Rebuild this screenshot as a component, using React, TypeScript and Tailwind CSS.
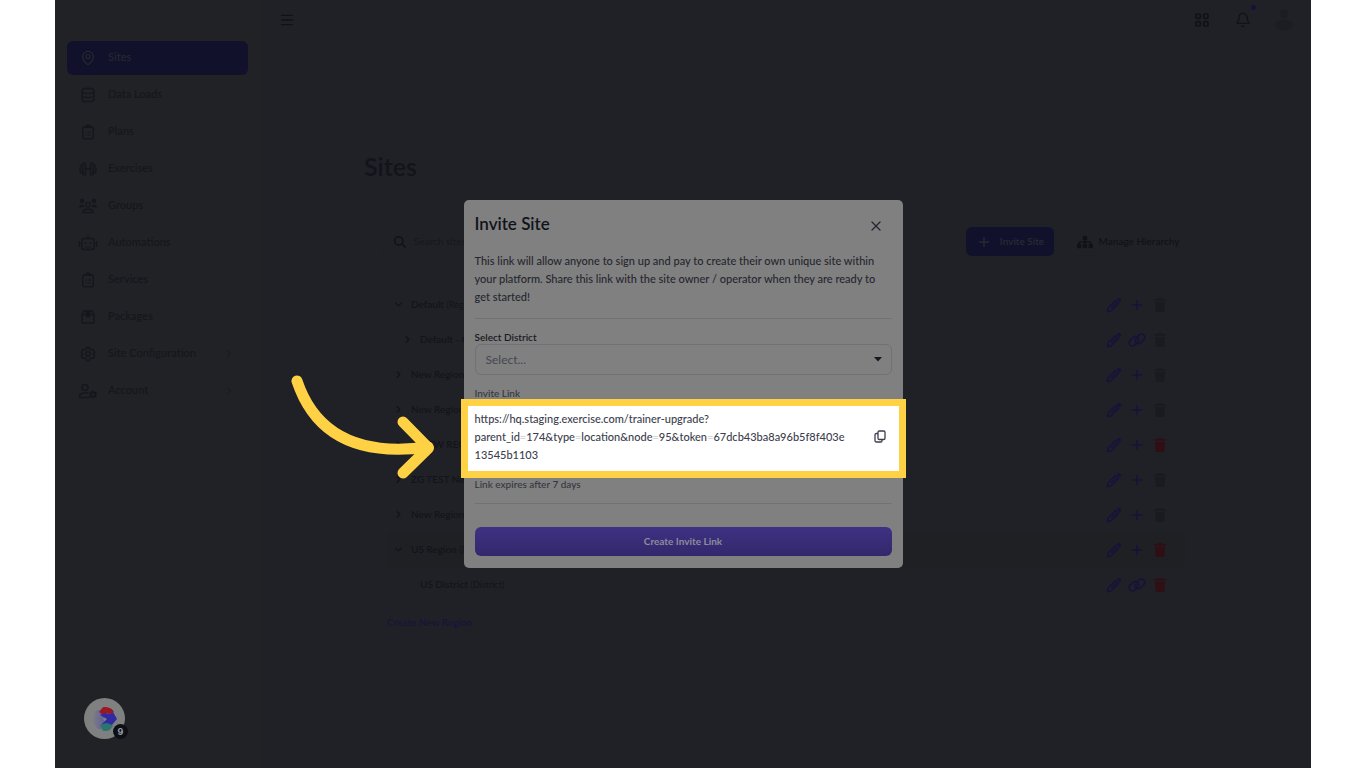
import { useState } from "react"
import type { ReactNode } from "react"
import { Bell, ChevronDown, ChevronRight, MapPin, Menu, Plus, X } from "lucide-react"
import { FaMagnifyingGlass, FaSitemap } from "react-icons/fa6"

const DatabaseIcon = () => (
    <svg viewBox="0 0 16 16" className="w-4 h-4" fill="none" stroke="currentColor" strokeWidth="1.5">
        <rect x="2" y="1.500" width="12" height="13" rx="3" />
        <path d="M2 4.500c0 1.500 2 2 6 2s6-.5 6-2M2 8.500c0 1.500 2 2 6 2s6-.5 6-2" />
    </svg>
)

const ClipboardIcon = () => (
    <svg viewBox="0 0 16 16" className="w-4 h-4" fill="none" stroke="currentColor" strokeWidth="1.5">
        <rect x="2.700" y="3" width="10.600" height="11.800" rx="1.500" />
        <path d="M5.500 3.500h5V2.200H9.500a1.500 1.500 0 0 0-3 0h-1z" fill="currentColor" strokeWidth="1" />
        <path d="M5 8h1.300M7.500 8h3.500M5 11h1.300M7.500 11h3.500" strokeWidth="1.200" />
    </svg>
)

const DumbbellIcon = () => (
    <svg viewBox="0 0 20 16" className="w-5 h-4" fill="none" stroke="currentColor" strokeWidth="1.5" strokeLinejoin="round">
        <rect x="5" y="2" width="2.5" height="12" rx="1" />
        <rect x="12.5" y="2" width="2.5" height="12" rx="1" />
        <path d="M5 4H4a1.5 1.5 0 0 0-1.500 1.500v5A1.500 1.500 0 0 0 4 12h1M15 4h1a1.500 1.500 0 0 1 1.500 1.500v5A1.500 1.500 0 0 1 16 12h-1M7.500 8h5M1 8h1.500M17.500 8H19" />
    </svg>
)

const GroupsIcon = () => (
    <svg viewBox="0 0 20 16" className="w-5 h-4">
        <g fill="currentColor">
            <circle cx="4" cy="3" r="2.200" />
            <circle cx="16" cy="3" r="2.200" />
            <path d="M1 9.500C1 7.500 2.500 6.500 4 6.500c1 0 1.800.3 2.200.8-.5.6-.7 1.500-.5 2.200zM19 9.500c0-2-1.500-3-3-3-1 0-1.800.3-2.200.8.5.6.7 1.500.5 2.200z" />
        </g>
        <g fill="none" stroke="currentColor" strokeWidth="1.500">
            <circle cx="10" cy="6.500" r="2.300" />
            <path d="M5 14.500c0-2 1.500-3.300 3.200-3.300h3.600c1.700 0 3.200 1.300 3.200 3.300z" strokeLinejoin="round" />
        </g>
    </svg>
)

const RobotIcon = () => (
    <svg viewBox="0 0 20 16" className="w-5 h-4" fill="none" stroke="currentColor" strokeWidth="1.500">
        <rect x="4" y="3.500" width="12" height="11" rx="2" />
        <path d="M10 .5v3M1.500 7v4.500M18.500 7v4.500" strokeLinecap="round" />
        <path d="M7 12h1.200M9.400 12h1.200M11.800 12H13" strokeWidth="1.300" />
        <circle cx="7.500" cy="8" r="1.100" fill="currentColor" stroke="none" />
        <circle cx="12.500" cy="8" r="1.100" fill="currentColor" stroke="none" />
    </svg>
)

const PackageIcon = () => (
    <svg viewBox="0 0 16 16" className="w-4 h-4" fill="none" stroke="currentColor" strokeWidth="1.500" strokeLinejoin="round">
        <path d="M2 5.500 3.500 2h9L14 5.500V13a1 1 0 0 1-1 1H3a1 1 0 0 1-1-1zM2 5.500h12" />
        <path d="M6.500 2h3v6L8 7.200 6.500 8z" fill="currentColor" />
    </svg>
)

const GearIcon = () => (
    <svg viewBox="0 0 16 16" className="w-4 h-4" fill="none" stroke="currentColor" strokeWidth="1.400" strokeLinejoin="round">
        <path d="M6.500 1.500h3l.6 1.900 1.200.7 2-.4 1.500 2.500L13.400 8l1.400 1.800-1.500 2.500-2-.4-1.200.7-.6 1.900h-3l-.6-1.900-1.200-.7-2 .4-1.500-2.500L2.600 8 1.200 6.200l1.500-2.500 2 .4 1.200-.7z" />
        <circle cx="8" cy="8" r="2.200" />
    </svg>
)

const AccountIcon = () => (
    <svg viewBox="0 0 20 16" className="w-5 h-4" fill="none" stroke="currentColor" strokeWidth="1.500">
        <circle cx="7" cy="4.500" r="3" />
        <path d="M11.500 14.500h-10c0-3 2-4.500 4.500-4.500h3.500" strokeLinecap="round" strokeLinejoin="round" />
        <circle cx="15" cy="11.500" r="2.200" strokeWidth="2" />
        <path d="M15 7.500v1.500M15 14v1.500M11.500 9.500l1.300.8M17.200 12.700l1.300.8M18.500 9.500l-1.300.8M12.800 12.700l-1.300.8" strokeWidth="1.600" />
    </svg>
)

const GridIcon = () => (
    <svg viewBox="0 0 14 14" className="w-3.5 h-3.5" fill="none" stroke="currentColor" strokeWidth="1.700">
        <rect x="1" y="1" width="4.300" height="4.300" rx="1" />
        <rect x="8.700" y="1" width="4.300" height="4.300" rx="1" />
        <rect x="1" y="8.700" width="4.300" height="4.300" rx="1" />
        <rect x="8.700" y="8.700" width="4.300" height="4.300" rx="1" />
    </svg>
)

const PencilIcon = () => (
    <svg viewBox="0 0 16 16" className="w-4 h-4">
        <path d="M9.500 3.500 2.200 10.800 1.200 14.800l4-1 7.300-7.300z" fill="none" stroke="currentColor" strokeWidth="1.500" strokeLinejoin="round" />
        <path d="M5 11 10 6" stroke="currentColor" strokeWidth="1.400" />
        <path d="m10.600 2.400 1-1a1.700 1.700 0 0 1 2.400 0l.6.6a1.700 1.700 0 0 1 0 2.400l-1 1z" fill="currentColor" />
    </svg>
)

const LinkIcon = () => (
    <svg viewBox="0 0 18 16" className="w-[18px] h-4 shrink-0" fill="none" stroke="currentColor" strokeWidth="1.700" strokeLinecap="round">
        <path d="M8 11.800 6.800 13a3.300 3.300 0 0 1-4.700-4.700l2.800-2.800a3.300 3.300 0 0 1 5.200 4" />
        <path d="M10 4.200 11.200 3a3.300 3.300 0 0 1 4.700 4.700l-2.800 2.800a3.300 3.300 0 0 1-5.200-4" />
    </svg>
)

const TrashIcon = () => (
    <svg viewBox="0 0 14 16" className="w-3.5 h-4" fill="currentColor">
        <path d="M5 1h4l.7 1H13v1.700H1V2h3.300zM2 4.700h10l-.6 9.300a1.200 1.200 0 0 1-1.200 1H3.800a1.200 1.200 0 0 1-1.200-1z" />
    </svg>
)

const CopyIcon = () => (
    <svg viewBox="0 0 12 13" className="w-3 h-[13px]" fill="none" stroke="currentColor" strokeWidth="1.300" strokeLinejoin="round">
        <rect x="4" y="1" width="7" height="8.500" rx="1.300" />
        <path d="M4 3.500H2.300A1.300 1.300 0 0 0 1 4.800v5.900A1.300 1.300 0 0 0 2.300 12h4.400A1.300 1.300 0 0 0 8 10.700V9.500" />
    </svg>
)

const navItems: { label: string; icon: ReactNode; active?: boolean; arrow?: boolean }[] = [
    { label: "Sites", icon: <MapPin className="w-4 h-4" />, active: true },
    { label: "Data Loads", icon: <DatabaseIcon /> },
    { label: "Plans", icon: <ClipboardIcon /> },
    { label: "Exercises", icon: <DumbbellIcon /> },
    { label: "Groups", icon: <GroupsIcon /> },
    { label: "Automations", icon: <RobotIcon /> },
    { label: "Services", icon: <ClipboardIcon /> },
    { label: "Packages", icon: <PackageIcon /> },
    { label: "Site Configuration", icon: <GearIcon />, arrow: true },
    { label: "Account", icon: <AccountIcon />, arrow: true },
]

const rows: { name: string; kind?: string; open?: boolean; nested?: boolean; leaf?: boolean; removable?: boolean; hovered?: boolean }[] = [
    { name: "Default", kind: "(Region)", open: true },
    { name: "Default - C", nested: true },
    { name: "New Region" },
    { name: "New Region" },
    { name: "A NEW REG", removable: true },
    { name: "ZG TEST New" },
    { name: "New Region" },
    { name: "US Region", kind: "(R)", open: true, removable: true, hovered: true },
    { name: "US District", kind: "(District)", nested: true, leaf: true, removable: true },
]

const Eq = () => <span className="text-[#d4d5d8]">=</span>

function Sidebar() {
    return (
        <aside className="w-[206px] shrink-0 bg-[#212226] pt-[41px] pl-3 pr-[13px]">
            <nav className="flex flex-col gap-[3px]">
                {navItems.map((item) => (
                    <a
                        key={item.label}
                        href="#"
                        className={`h-[34px] rounded-md flex items-center gap-2 pl-[9px] pr-[13px] pb-px text-[11px] font-semibold ${item.active ? "bg-[#11112b] text-[#25262f]" : "text-[#15171c]"}`}
                    >
                        <span className="w-6 flex justify-center">{item.icon}</span>
                        <span className="flex-1">{item.label}</span>
                        {item.arrow && <ChevronRight className="w-3 h-3" />}
                    </a>
                ))}
            </nav>
        </aside>
    )
}

function InviteModal({ onClose }: { onClose: () => void }) {
    return (
        <div role="dialog" aria-labelledby="invite-title" className="relative w-[439px] rounded-[5px] bg-[#808080] px-[11px] py-3 text-[#25272f] self-start">
            <div className="flex items-center justify-between pr-2">
                <h2 id="invite-title" className="text-[17px] leading-6 font-semibold text-[#11131b]">Invite Site</h2>
                <button aria-label="Close" onClick={onClose} className="pt-1">
                    <X className="w-4 h-4" strokeWidth={1.8} />
                </button>
            </div>
            <p className="mt-4 text-[11px] leading-[18px] font-medium">
                This link will allow anyone to sign up and pay to create their own unique site within<br />
                your platform. Share this link with the site owner / operator when they are ready to<br />
                get started!
            </p>
            <hr className="mt-3 border-[#717276]" />
            <label htmlFor="district" className="block mt-[11px] text-[10px] leading-[14px] font-semibold text-[#181a22]">Select District</label>
            <div className="relative">
                <select id="district" className="block w-full h-[31px] appearance-none rounded-md border border-[#707176] px-[10px] text-[12px] text-[#454750]">
                    <option>Select...</option>
                </select>
                <svg viewBox="0 0 8 5" className="absolute right-[10px] top-[13px] w-2 h-[5px] pointer-events-none">
                    <path d="M0 0h8L4 4.500z" fill="#16181f" />
                </svg>
            </div>
            <div className="mt-3 text-[10px] leading-3 font-medium text-[#34363e]">Invite Link</div>
            <div className="relative -mx-[14px] h-[79px] border-[7px] border-[#ffd145] bg-white px-[7px] pt-1 flex text-[11px] leading-[18px] font-medium text-[#3c3e4d]">
                <p className="flex-1">
                    https://hq.staging.exercise.com/trainer-upgrade?<br />
                    parent_id<Eq />174&amp;type<Eq />location&amp;node<Eq />95&amp;token<Eq />67dcb43ba8a96b5f8f403e<br />
                    13545b1103
                </p>
                <button aria-label="Copy invite link" className="self-start mt-5 mr-[6px]">
                    <CopyIcon />
                </button>
            </div>
            <p className="text-[10px] leading-3 font-medium text-[#34363e]">Link expires after 7 days</p>
            <hr className="mt-[13px] border-[#717276]" />
            <button className="mt-[23px] h-[29px] w-full rounded-md bg-linear-to-b from-[#3e3183] to-[#33286c] text-[10px] font-bold text-[#8d8b9d]">
                Create Invite Link
            </button>

            {/* Pointer towards the invite link */}
            <svg viewBox="0 0 190 130" className="absolute -left-[184px] top-[160px] w-[190px] h-[130px] pointer-events-none" fill="none" stroke="#ffd145" strokeWidth="11" strokeLinecap="round" strokeLinejoin="round">
                <path d="M17 21C32 66 68 98 148 87" />
                <path d="M123 62l25.500 26L123 113" />
            </svg>
        </div>
    )
}

export default function App() {
    const [open, setOpen] = useState(true)

    return (
        <div className="min-h-screen bg-white px-[55px] font-['Lato',sans-serif]">
            <div className="relative min-h-screen flex bg-[#202126]">
                <Sidebar />

                <div className="flex-1 min-w-0">
                    <header className="h-[41px] flex items-center justify-between pl-[18px] pr-[18px] border-b border-[#1f2025] text-[#101217]">
                        <button aria-label="Menu"><Menu className="w-4 h-4" /></button>
                        <div className="flex items-center gap-6">
                            <button aria-label="Apps" className="mr-[2px]"><GridIcon /></button>
                            <button aria-label="Notifications" className="relative">
                                <Bell className="w-4 h-4" />
                                <span className="absolute -right-[5px] -top-[7px] w-[5px] h-[5px] rounded-full bg-[#14123a]" />
                            </button>
                            <button aria-label="Profile">
                                <svg viewBox="0 0 18 22" className="w-[18px] h-[22px]" fill="#1c1d21">
                                    <circle cx="9" cy="5" r="4.500" />
                                    <ellipse cx="9" cy="16" rx="8.500" ry="5.500" />
                                </svg>
                            </button>
                        </div>
                    </header>

                    <main className="mx-auto max-w-[844px] pt-[109px]">
                        <h1 className="text-[25px] leading-8 font-semibold text-[#12141b]">Sites</h1>

                        <div className="px-[18px] mt-[45px] text-[10px] font-semibold text-[#121419]">
                            <div className="flex items-center gap-3 pb-3 border-b border-[#1f2025]">
                                <label className="flex items-center gap-2 h-[25px] w-[260px] rounded border border-[#1f2025] pl-[11px]">
                                    <FaMagnifyingGlass className="w-3 h-3 text-[#101217]" />
                                    <input aria-label="Search sites" placeholder="Search sites" className="w-40 font-normal placeholder:text-[#15171c] outline-none" />
                                </label>
                                <button onClick={() => setOpen(true)} className="ml-auto h-[29px] w-[88px] rounded-md bg-[#11112b] text-[#292a35] flex items-center justify-center gap-2">
                                    <Plus className="w-4 h-4" /> Invite Site
                                </button>
                                <button className="h-[29px] w-[124px] rounded-md border border-[#1f2025] text-[#101217] flex items-center justify-center gap-[6px]">
                                    <FaSitemap className="w-4 h-4" /> Manage Hierarchy
                                </button>
                            </div>

                            <ul className="mt-[18px] mx-[5px]">
                                {rows.map((row, i) => (
                                    <li key={i} className={`h-[35px] flex items-center rounded pr-[13px] ${row.nested ? "pl-[15px]" : "pl-[6px]"} ${row.hovered ? "bg-[#1f2024]" : ""}`}>
                                        <span className="w-[18px]">
                                            {!row.leaf && (row.open ? <ChevronDown className="w-[11px] h-[11px]" strokeWidth={3} /> : <ChevronRight className="w-[11px] h-[11px]" strokeWidth={3} />)}
                                        </span>
                                        <span>{row.name} {row.kind && <span className="text-[9px] font-normal">{row.kind}</span>}</span>
                                        <div className="ml-auto flex items-center text-[#14133a]">
                                            <button aria-label="Edit" className="w-6 flex justify-center"><PencilIcon /></button>
                                            <button aria-label={row.nested ? "Link" : "Add"} className="w-[22px] flex justify-center">
                                                {row.nested ? <LinkIcon /> : <Plus className="w-4 h-4 shrink-0" />}
                                            </button>
                                            <button aria-label="Delete" className={`w-6 flex justify-center ${row.removable ? "text-[#2f0f14]" : "text-[#1a1b1e]"}`}><TrashIcon /></button>
                                        </div>
                                    </li>
                                ))}
                            </ul>
                            <a href="#" className="inline-block mt-[13px] ml-[5px] text-[#16143a]">Create New Region</a>
                        </div>
                    </main>
                </div>

                {open && (
                    <div className="absolute inset-0 flex justify-center pt-[200px]">
                        <InviteModal onClose={() => setOpen(false)} />
                    </div>
                )}

                {/* Help widget */}
                <button aria-label="Open help" className="absolute left-[29px] bottom-[29px] w-[41px] h-[41px] rounded-full bg-[#7f8180] grid place-items-center">
                    <svg viewBox="0 0 24 24" className="w-6 h-6">
                        <defs>
                            <linearGradient id="fade" x1="0" x2="1">
                                <stop offset="0" stopColor="#7c7b88" />
                                <stop offset="1" stopColor="#5d5a98" />
                            </linearGradient>
                            <clipPath id="disc"><circle cx="12" cy="12" r="12" /></clipPath>
                        </defs>
                        <g clipPath="url(#disc)">
                            <path d="M0 3h8l6 5-4 4 4 5-6 5H0z" fill="url(#fade)" />
                            <path d="M6 5 10 0h8l3 5-4 2-3-1-4 2z" fill="#9d1722" />
                            <path d="M7 8l5-2 5 1 3-2 4 7-5 6-6-1-5 1 6-6z" fill="#30299f" />
                            <path d="m7 18 6-2 4 1 3 2-4 5h-6z" fill="#2c756f" />
                        </g>
                    </svg>
                    <span className="absolute -right-[3px] bottom-0 w-[15px] h-[15px] rounded-full bg-[#0d0f18] text-[#9a9b9f] text-[9px] leading-[15px] font-bold font-['Inter',sans-serif]">9</span>
                </button>
            </div>
        </div>
    )
}
